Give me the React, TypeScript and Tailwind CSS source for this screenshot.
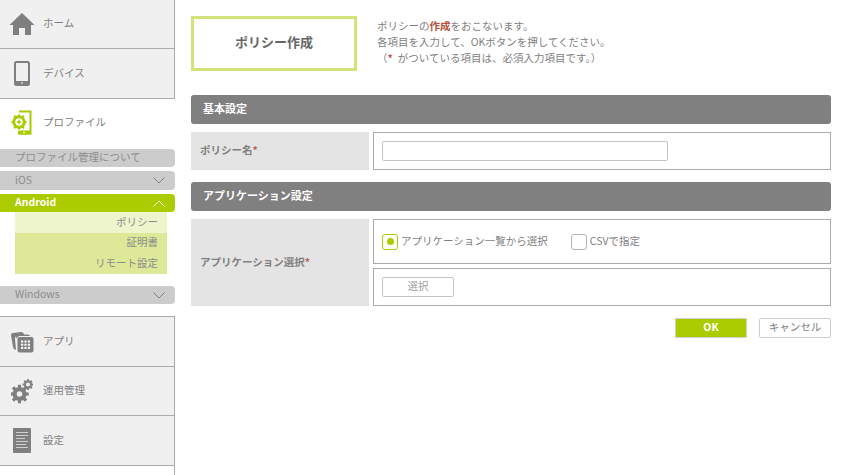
import React from "react";

const font = { fontFamily: '"Noto Sans CJK JP", "Noto Sans", sans-serif' };

const HomeIcon = () => (
    <svg width="26" height="24" viewBox="0 0 26 24" fill="#7f7f7f">
        <path d="M13 1 L25.5 13 L22 13 L22 23 L16 23 L16 16 L10 16 L10 23 L4 23 L4 13 L.5 13 Z" />
    </svg>
);

const DeviceIcon = () => (
    <svg width="16" height="25" viewBox="0 0 16 25">
        <rect x="1" y="1" width="14" height="23" rx="1.5" fill="none" stroke="#7f7f7f" strokeWidth="2" />
        <rect x="1" y="20" width="14" height="4" fill="#7f7f7f" />
        <rect x="7" y="21.5" width="2" height="1" fill="#fff" />
    </svg>
);

const ProfileIcon = () => (
    <svg width="22" height="25" viewBox="0 0 22 25">
        <path d="M8 1.5 H19.5 V23.5 H8 V21" fill="none" stroke="#a9cc00" strokeWidth="2" />
        <rect x="8" y="20.5" width="12" height="4" fill="#a9cc00" />
        <rect x="12" y="22" width="2" height="1" fill="#fff" />
        <circle cx="8" cy="12" r="5.2" fill="none" stroke="#a9cc00" strokeWidth="3" />
        <path d="M7 4.5 H9 V7 H7 Z M7 17 H9 V19.5 H7 Z M.5 11 H3 V13 H.5 Z M13 11 H15.5 V13 H13 Z M2.4 6.4 L3.8 5 L5.5 6.7 L4.1 8.1 Z M10.5 6.7 L12.2 5 L13.6 6.4 L11.9 8.1 Z M2.4 17.6 L4.1 15.9 L5.5 17.3 L3.8 19 Z M10.5 17.3 L11.9 15.9 L13.6 17.6 L12.2 19 Z" fill="#a9cc00" />
        <path d="M7.3 9.8 H8.7 V11.3 H10.2 V12.7 H8.7 V14.2 H7.3 V12.7 H5.8 V11.3 H7.3 Z" fill="#a9cc00" />
    </svg>
);

const AppIcon = () => (
    <svg width="25" height="22" viewBox="0 0 25 22">
        <path d="M1 4 Q1 2 3 2 L11 1 Q13 1 14 3 L14 5 L7 5 Q5 5 5 8 L6 19 Q3 18 3 16 Z" fill="#7f7f7f" />
        <path d="M6 6 Q6 3.5 9 3.5 L18 3.5 Q20 3.5 20 5 L10 5 Q7 5 7 8 Z" fill="#7f7f7f" />
        <rect x="7.5" y="6" width="16" height="15.5" rx="2" fill="#7f7f7f" />
        <g fill="#fff">
            <rect x="11" y="9.5" width="2.2" height="2" />
            <rect x="14.4" y="9.5" width="2.2" height="2" />
            <rect x="17.8" y="9.5" width="2.2" height="2" />
            <rect x="11" y="12.7" width="2.2" height="2" />
            <rect x="14.4" y="12.7" width="2.2" height="2" />
            <rect x="17.8" y="12.7" width="2.2" height="2" />
            <rect x="11" y="15.9" width="2.2" height="2" />
            <rect x="14.4" y="15.9" width="2.2" height="2" />
            <rect x="17.8" y="15.9" width="2.2" height="2" />
        </g>
    </svg>
);

const GearPath = ({ cx, cy, r, hole, width }: { cx: number; cy: number; r: number; hole: number; width: number }) => (
    <g fill="#7f7f7f">
        {[0, 45, 90, 135, 180, 225, 270, 315].map((a) => (
            <rect
                key={a}
                x={cx - width / 2}
                y={cy - r - width * 0.7}
                width={width}
                height={width}
                transform={`rotate(${a} ${cx} ${cy})`}
            />
        ))}
        <circle cx={cx} cy={cy} r={r} />
        <circle cx={cx} cy={cy} r={hole} fill="#f0f0f0" />
    </g>
);

const GearsIcon = () => (
    <svg width="22" height="25" viewBox="0 0 22 25">
        <GearPath cx={8.5} cy={15} r={7} hole={2.8} width={3.2} />
        <GearPath cx={17} cy={5.5} r={4} hole={2} width={2} />
    </svg>
);

const DocIcon = () => (
    <svg width="18" height="25" viewBox="0 0 18 25">
        <rect width="18" height="25" rx="1" fill="#7f7f7f" />
        <g fill="#d0d0d0">
            <rect x="3" y="4" width="12" height="1" />
            <rect x="3" y="7" width="12" height="1" />
            <rect x="3" y="10" width="9" height="1" />
            <rect x="3" y="13" width="12" height="1" />
            <rect x="3" y="16" width="10" height="1" />
            <rect x="3" y="19" width="12" height="1" />
        </g>
    </svg>
);

const Chevron = ({ up, color }: { up?: boolean; color: string }) => (
    <svg width="12" height="7" viewBox="0 0 12 7" fill="none" stroke={color} strokeWidth="1">
        <path d={up ? "M.5 6.5 L6 1 L11.5 6.5" : "M.5 .5 L6 6 L11.5 .5"} />
    </svg>
);

const NavItem = ({ icon, label, className }: { icon: React.ReactNode; label: string; className: string }) => (
    <div className={`flex items-center bg-[#f0f0f0] border-r border-r-[#aaaaaa] border-b border-b-[#aaaaaa] ${className}`}>
        <div className="w-[42px] flex justify-center pl-[2px] shrink-0">{icon}</div>
        <span className="ml-[1px] mb-[2px] text-[10.5px] text-[#808080]">{label}</span>
    </div>
);

const Pill = ({ label, chevron }: { label: string; chevron?: boolean }) => (
    <div className="flex items-center justify-between h-[18px] bg-[#cccccc] rounded-r-[4px] pl-[15px] pr-[10px] text-[10.5px] text-[#8c8c8c]">
        <span className="mb-[2px]">{label}</span>
        {chevron && <Chevron color="#808080" />}
    </div>
);

const Sidebar = () => (
    <div className="w-[175px] h-[475px] shrink-0 flex flex-col">
        <NavItem icon={<HomeIcon />} label="ホーム" className="h-[49px]" />
        <NavItem icon={<DeviceIcon />} label="デバイス" className="h-[50px]" />
        <div className="h-[50px] flex items-center pb-[4px]">
            <div className="w-[42px] flex justify-center pl-[2px] shrink-0">
                <ProfileIcon />
            </div>
            <span className="ml-[1px] text-[10.5px] text-[#808080]">プロファイル</span>
        </div>
        <div className="flex flex-col">
            <Pill label="プロファイル管理について" />
            <div className="h-[4px]" />
            <div className="h-[19px] flex items-center justify-between bg-[#cccccc] rounded-r-[4px] pl-[15px] pr-[10px] text-[10.5px] text-[#8c8c8c]">
                <span className="mb-[2px]">iOS</span>
                <Chevron color="#808080" />
            </div>
            <div className="h-[4px]" />
            <div className="h-[18px] flex items-center justify-between bg-[#aacc00] rounded-r-[4px] pl-[15px] pr-[10px] text-[10.5px] font-bold text-white">
                <span className="mb-[2px]">Android</span>
                <Chevron up color="#ffffff" />
            </div>
            <div className="ml-[15px] w-[152px] text-[10.5px] text-[#8c8c8c] text-right">
                <div className="h-[21px] bg-[#eef4cc] pr-[9px] pb-[2px] flex items-center justify-end">ポリシー</div>
                <div className="h-[20px] bg-[#dde999] pr-[9px] pb-[2px] flex items-center justify-end">証明書</div>
                <div className="h-[21px] bg-[#dde999] pr-[9px] pb-[2px] flex items-center justify-end">リモート設定</div>
            </div>
            <div className="h-[12px]" />
            <Pill label="Windows" chevron />
        </div>
        <div className="h-[12px]" />
        <div className="border-t border-t-[#aaaaaa]">
            <NavItem icon={<AppIcon />} label="アプリ" className="h-[50px]" />
            <NavItem icon={<GearsIcon />} label="運用管理" className="h-[49px]" />
            <NavItem icon={<DocIcon />} label="設定" className="h-[50px]" />
        </div>
        <div className="flex-1 border-r border-r-[#aaaaaa]" />
    </div>
);

const SectionBar = ({ label }: { label: string }) => (
    <div className="h-[29px] bg-[#808080] rounded-[3px] flex items-center pl-[12px] pb-[2px] text-[11px] font-bold text-white">
        {label}
    </div>
);

const Label = ({ label, className }: { label: string; className: string }) => (
    <div className={`w-[178px] shrink-0 bg-[#e4e4e4] flex items-center pl-[9px] pb-[2px] text-[10.5px] font-bold text-[#808080] ${className}`}>
        {label}
        <span className="text-[#c06060]">*</span>
    </div>
);

const Box = ({ children, className }: { children?: React.ReactNode; className: string }) => (
    <div className={`border border-[#aaaaaa] flex items-center pl-[8px] ${className}`}>{children}</div>
);

export default function App() {
    return (
        <div className="flex w-[848px] h-[475px] overflow-hidden bg-white" style={font}>
            <Sidebar />
            <div className="w-[640px] ml-[16px] pt-[16px]">
                <div className="flex">
                    <div className="w-[166px] h-[55px] border-[3px] border-[#d4e27a] pb-[3px] flex items-center justify-center text-[13px] font-bold text-[#666666]">
                        ポリシー作成
                    </div>
                    <div className="ml-[20px] mt-[2px] text-[10.5px] leading-[16px] text-[#808080]">
                        <p>
                            ポリシーの<span className="font-bold text-[#b5533c]">作成</span>をおこないます。
                        </p>
                        <p>各項目を入力して、OKボタンを押してください。</p>
                        <p>
                            （<span className="font-bold text-[#c06060] pr-[5px]">*</span>がついている項目は、必須入力項目です。）
                        </p>
                    </div>
                </div>

                <div className="mt-[24px]">
                    <SectionBar label="基本設定" />
                </div>
                <div className="flex mt-[8px] gap-[4px] h-[38px]">
                    <Label label="ポリシー名" className="h-full" />
                    <Box className="flex-1">
                        <input className="w-[286px] h-[20px] bg-white border border-[#c4c4c4] rounded-[2px]" />
                    </Box>
                </div>

                <div className="mt-[12px]">
                    <SectionBar label="アプリケーション設定" />
                </div>
                <div className="flex mt-[8px] gap-[4px] h-[87px]">
                    <Label label="アプリケーション選択" className="h-full" />
                    <div className="flex-1 flex flex-col gap-[4px]">
                        <Box className="h-[45px] text-[10.5px] text-[#808080]">
                            <span className="w-[16px] h-[16px] border border-[#aacc00] rounded-[3px] flex items-center justify-center">
                                <span className="w-[7px] h-[7px] rounded-full bg-[#aacc00]" />
                            </span>
                            <span className="ml-[3px] mb-[2px]">アプリケーション一覧から選択</span>
                            <span className="w-[16px] h-[16px] border border-[#b4b4b4] rounded-[3px] ml-[23px]" />
                            <span className="ml-[3px] mb-[2px]">CSVで指定</span>
                        </Box>
                        <Box className="h-[38px]">
                            <button className="w-[72px] h-[20px] pb-[2px] border border-[#c4c4c4] rounded-[2px] bg-white text-[10.5px] text-[#a0a0a0]">
                                選択
                            </button>
                        </Box>
                    </div>
                </div>

                <div className="flex justify-end gap-[12px] mt-[12px]">
                    <button className="w-[72px] h-[20px] pb-[2px] bg-[#aacc00] border border-[#d0d0d0] text-[10.5px] font-bold text-white">
                        OK
                    </button>
                    <button className="w-[72px] h-[20px] pb-[2px] bg-white border border-[#cccccc] rounded-[2px] text-[10.5px] text-[#808080]">
                        キャンセル
                    </button>
                </div>
            </div>
        </div>
    );
}
